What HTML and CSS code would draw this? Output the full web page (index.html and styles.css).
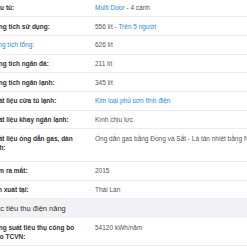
FILE: index.html
```html
<!DOCTYPE html>
<html lang="vi">
<head>
<meta charset="utf-8">
<link rel="stylesheet" href="styles.css">
</head>
<body>
<ul class="specs">
  <li class="row"><span class="label">Kiểu tủ:</span><span class="value"><a class="link">Multi Door</a> - 4 cánh</span></li>
  <li class="row"><span class="label">Dung tích sử dụng:</span><span class="value">556 lít - <a class="link">Trên 5 người</a></span></li>
  <li class="row"><span class="label"><a class="link">Dung tích tổng:</a></span><span class="value">626 lít</span></li>
  <li class="row"><span class="label">Dung tích ngăn đá:</span><span class="value">211 lít</span></li>
  <li class="row"><span class="label">Dung tích ngăn lạnh:</span><span class="value">345 lít</span></li>
  <li class="row"><span class="label">Chất liệu cửa tủ lạnh:</span><span class="value"><a class="link">Kim loại phủ sơn tĩnh điện</a></span></li>
  <li class="row"><span class="label">Chất liệu khay ngăn lạnh:</span><span class="value">Kính chịu lực</span></li>
  <li class="row row-tall"><span class="label">Chất liệu ống dẫn gas, dàn lạnh:</span><span class="value">Ống dẫn gas bằng Đồng và Sắt - Lá tản nhiệt bằng Nhôm</span></li>
  <li class="row"><span class="label">Năm ra mắt:</span><span class="value">2015</span></li>
  <li class="row"><span class="label">Sản xuất tại:</span><span class="value">Thái Lan</span></li>
  <li class="section">Mức tiêu thụ điện năng</li>
  <li class="row"><span class="label">Công suất tiêu thụ công bố theo TCVN:</span><span class="value">54120 kWh/năm</span></li>
</ul>
</body>
</html>
```
FILE: styles.css
```css
html, body {
  margin: 0;
  padding: 0;
  background: #fff;
  overflow: hidden;
}
.specs {
  list-style: none;
  margin: -1.3px 0 0 -20px;
  padding: 0;
  width: 380px;
  font-family: "Liberation Sans", Arial, sans-serif;
  font-size: 6.5px;
  line-height: 9px;
  color: #333;
}
.row {
  display: flex;
  padding: 4.33px 0 4.34px 10px;
  border-bottom: 1px solid #ededed;
}
.row-tall {
  padding-bottom: 9.5px;
}
.label {
  flex: 0 0 91px;
  margin-right: 14px;
  font-weight: bold;
  color: #333;
}
.value {
  flex: 1;
  color: #555;
  white-space: nowrap;
}
.link {
  color: #288ad6;
  font-weight: normal;
  text-decoration: none;
}
.section {
  background: #f1f2f5;
  padding: 5px 0 5px 9px;
  font-size: 7.5px;
  line-height: 9px;
  color: #333;
}
```
